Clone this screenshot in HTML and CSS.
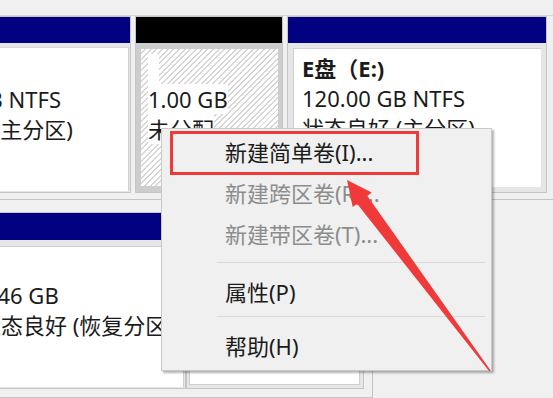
FILE: index.html
```html
<!DOCTYPE html>
<html lang="zh-CN">
<head>
  <meta charset="UTF-8">
  <title>磁盘管理</title>
  <link rel="stylesheet" href="styles.css">
</head>
<body>
  <div class="screen">
    <div class="disk disk-top">
      <div class="part part-c">
        <div class="hdr navy"></div>
        <div class="body">
          <div class="inner">
            <div class="name">C盘（C:)</div>
            <div class="size">119.24 GB NTFS</div>
            <div>状态良好 (主分区)</div>
          </div>
        </div>
      </div>
      <div class="part part-free">
        <div class="hdr black"></div>
        <div class="body">
          <div class="inner hatch">
            <div><span class="lbl">&nbsp;&nbsp;</span></div>
            <div><span class="lbl">1.00 GB</span></div>
            <div><span class="lbl">未分配</span></div>
          </div>
        </div>
      </div>
      <div class="part part-e">
        <div class="hdr navy"></div>
        <div class="body">
          <div class="inner">
            <div class="name">E盘（E:)</div>
            <div>120.00 GB NTFS</div>
            <div>状态良好 (主分区)</div>
          </div>
        </div>
      </div>
    </div>

    <div class="disk disk-bottom">
      <div class="row">
        <div class="part part-rec">
          <div class="hdr navy"></div>
          <div class="body">
            <div class="inner">
              <div class="name">&nbsp;</div>
              <div>0.46 GB</div>
              <div>状态良好 (恢复分区)</div>
            </div>
          </div>
        </div>
        <div class="part part-next">
          <div class="hdr navy"></div>
          <div class="body">
            <div class="inner"></div>
          </div>
        </div>
      </div>
    </div>

    <div class="menu">
      <div class="item">新建简单卷(I)...</div>
      <div class="item off">新建跨区卷(R)...</div>
      <div class="item off">新建带区卷(T)...</div>
      <div class="sep"></div>
      <div class="item tall">属性(P)</div>
      <div class="sep sep2"></div>
      <div class="item tall">帮助(H)</div>
    </div>

    <div class="mark"></div>

    <svg class="arrow" width="553" height="398" viewBox="0 0 553 398">
      <polygon fill="#f03a3a" points="347,180 371.7,192.5 367.4,195.9 490.6,370.6 489.4,371.4 357.1,203.8 352.7,207.1"/>
    </svg>
  </div>
</body>
</html>
```

FILE: styles.css
```css
body {
  margin: 0;
  background: #f0f0f0;
  font-family: "Noto Sans", "Noto Sans CJK SC", sans-serif;
}
.screen {
  position: relative;
  width: 553px;
  height: 398px;
  overflow: hidden;
  background: #f0f0f0;
  color: #1b1b1b;
  font-size: 22px;
}

/* disk rows */
.disk {
  display: flex;
}
.disk-top {
  margin-top: 15px;
  border-top: 1px solid #d4d4d4;
  margin-left: -140px;
  gap: 4px;
}
.disk-bottom {
  margin-top: 6px;
  border-top: 1px solid #c4c4c4;
  padding-top: 12px;
  margin-left: -100px;
}
.row {
  display: flex;
  padding: 0 8px 8px 0;
  border-right: 1px solid #c4c4c4;
  border-bottom: 1px solid #c4c4c4;
}

.part {
  box-sizing: border-box;
  display: flex;
  flex-direction: column;
  border: 1px solid #c6c6c6;
  background: #e6e6e6;
}
.hdr {
  height: 26px;
}
.navy {
  background: #000080;
}
.black {
  background: #000;
}
.body {
  flex: 1;
  display: flex;
}
.inner {
  flex: 1;
  background: #fff;
  line-height: 30px;
  white-space: nowrap;
  overflow: hidden;
}
.name {
  font-weight: bold;
}

.part-c {
  width: 271px;
  height: 177px;
}
.part-c .body {
  padding: 4px 1px 1px 0;
}
.part-c .inner {
  border-right: 1px solid #cfcfcf;
  border-top: 1px solid #d8d8d8;
  padding: 6px 0 0 39px;
}
.part-c .size {
  margin-left: -2px;
}

.part-free {
  width: 148px;
  height: 177px;
  background: #cdcdcd;
}
.part-free .body {
  padding: 6px 4px 6px 5px;
}
.hatch {
  background: repeating-linear-gradient(135deg, #fff 0 2.6px, #d6d6d6 2.6px 4px);
  padding: 5px 0 0 7px;
}
.lbl {
  background: #fff;
}

.part-e {
  width: 260px;
  height: 177px;
}
.part-e .body {
  padding: 5px 5px 5px 5px;
}
.part-e .inner {
  border-top: 1px solid #cfcfcf;
  border-left: 1px solid #cfcfcf;
  padding: 4px 0 0 8px;
}

.part-rec {
  width: 286px;
  height: 177px;
}
.part-rec .hdr,
.part-next .hdr {
  height: 27px;
}
.part-rec .body {
  padding: 6px 1px 1px 0;
}
.part-rec .inner {
  border-top: 1px solid #cfcfcf;
  border-right: 1px solid #cfcfcf;
  padding: 3px 0 0 78px;
}
.part-next {
  width: 178px;
  height: 177px;
}
.part-next .body {
  padding: 6px 3px 3px 2px;
}
.part-next .inner {
  border: 1px solid #cfcfcf;
}

/* context menu */
.menu {
  position: absolute;
  left: 161px;
  top: 128px;
  width: 331px;
  box-sizing: border-box;
  padding: 3px 0 2px;
  background: #f0f0f0;
  border: 1px solid #c9c9c9;
  box-shadow: 2px 2px 2px rgba(0, 0, 0, 0.3);
}
.item {
  height: 41px;
  line-height: 41px;
  padding-left: 63px;
  white-space: nowrap;
}
.item.tall {
  height: 44px;
  line-height: 44px;
}
.off {
  color: #8c8c8c;
}
.sep {
  height: 1px;
  margin: 7px 6px 7px 55px;
  background: #d9d9d9;
}
.sep2 {
  margin-top: 2px;
}

/* annotations */
.mark {
  position: absolute;
  left: 170px;
  top: 131px;
  width: 249px;
  height: 44px;
  box-sizing: border-box;
  border: 3px solid #ef3a3a;
}
.arrow {
  position: absolute;
  left: 0;
  top: 0;
  pointer-events: none;
}
```
